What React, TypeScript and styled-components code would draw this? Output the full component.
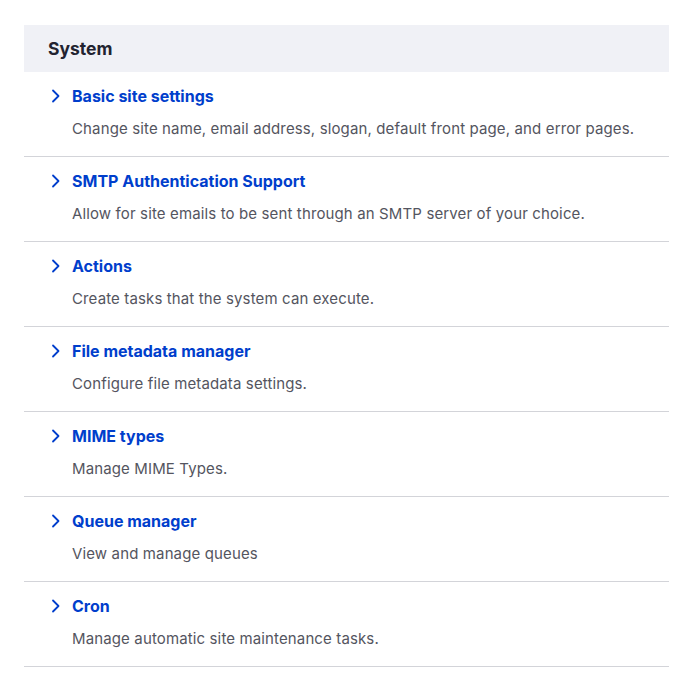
import styled, { createGlobalStyle } from 'styled-components'

const GlobalStyle = createGlobalStyle`
  html, body {
    margin: 0;
    padding: 0;
    background: #ffffff;
  }
  body {
    font-family: Inter, 'Noto Sans', 'Liberation Sans', sans-serif;
    -webkit-font-smoothing: antialiased;
  }
`

const Page = styled.div`
  padding: 25px 13px 0 24px;
`

const Panel = styled.section`
  width: 645px;
`

const PanelHeader = styled.h2`
  margin: 0;
  height: 47px;
  display: flex;
  align-items: center;
  padding: 0 24px 1px;
  box-sizing: border-box;
  background: #f0f1f6;
  color: #222330;
  font-size: 17.5px;
  font-weight: 700;
`

const List = styled.ul`
  list-style: none;
  margin: 0;
  padding: 0;
`

const Item = styled.li`
  padding: 14px 24px 17px 24px;
  border-bottom: 1px solid #d3d4d9;
`

const TitleRow = styled.div`
  display: flex;
  align-items: center;
  height: 20px;
`

const Chevron = styled.svg`
  width: 10px;
  height: 14px;
  flex: none;
  margin-left: 3px;
  margin-right: 11px;
`

const TitleLink = styled.a`
  color: #003ecc;
  font-size: 16px;
  font-weight: 700;
  line-height: 20px;
  text-decoration: none;
`

const Description = styled.p`
  margin: 13px 0 0 24px;
  color: #545560;
  font-size: 15px;
  line-height: 20px;
  letter-spacing: 0.13px;
`

const items = [
  {
    title: 'Basic site settings',
    description: 'Change site name, email address, slogan, default front page, and error pages.',
  },
  {
    title: 'SMTP Authentication Support',
    description: 'Allow for site emails to be sent through an SMTP server of your choice.',
  },
  { title: 'Actions', description: 'Create tasks that the system can execute.' },
  { title: 'File metadata manager', description: 'Configure file metadata settings.' },
  { title: 'MIME types', description: 'Manage MIME Types.' },
  { title: 'Queue manager', description: 'View and manage queues' },
  { title: 'Cron', description: 'Manage automatic site maintenance tasks.' },
]

export default function App() {
  return (
    <Page>
      <GlobalStyle />
      <Panel>
        <PanelHeader>System</PanelHeader>
        <List>
          {items.map((item) => (
            <Item key={item.title}>
              <TitleRow>
                <Chevron viewBox="0 0 10 14" aria-hidden="true">
                  <path
                    d="M2 1.5 L7.5 7 L2 12.5"
                    fill="none"
                    stroke="#003ecc"
                    strokeWidth="1.8"
                    strokeLinecap="round"
                    strokeLinejoin="round"
                  />
                </Chevron>
                <TitleLink href="#">{item.title}</TitleLink>
              </TitleRow>
              <Description>{item.description}</Description>
            </Item>
          ))}
        </List>
      </Panel>
    </Page>
  )
}
